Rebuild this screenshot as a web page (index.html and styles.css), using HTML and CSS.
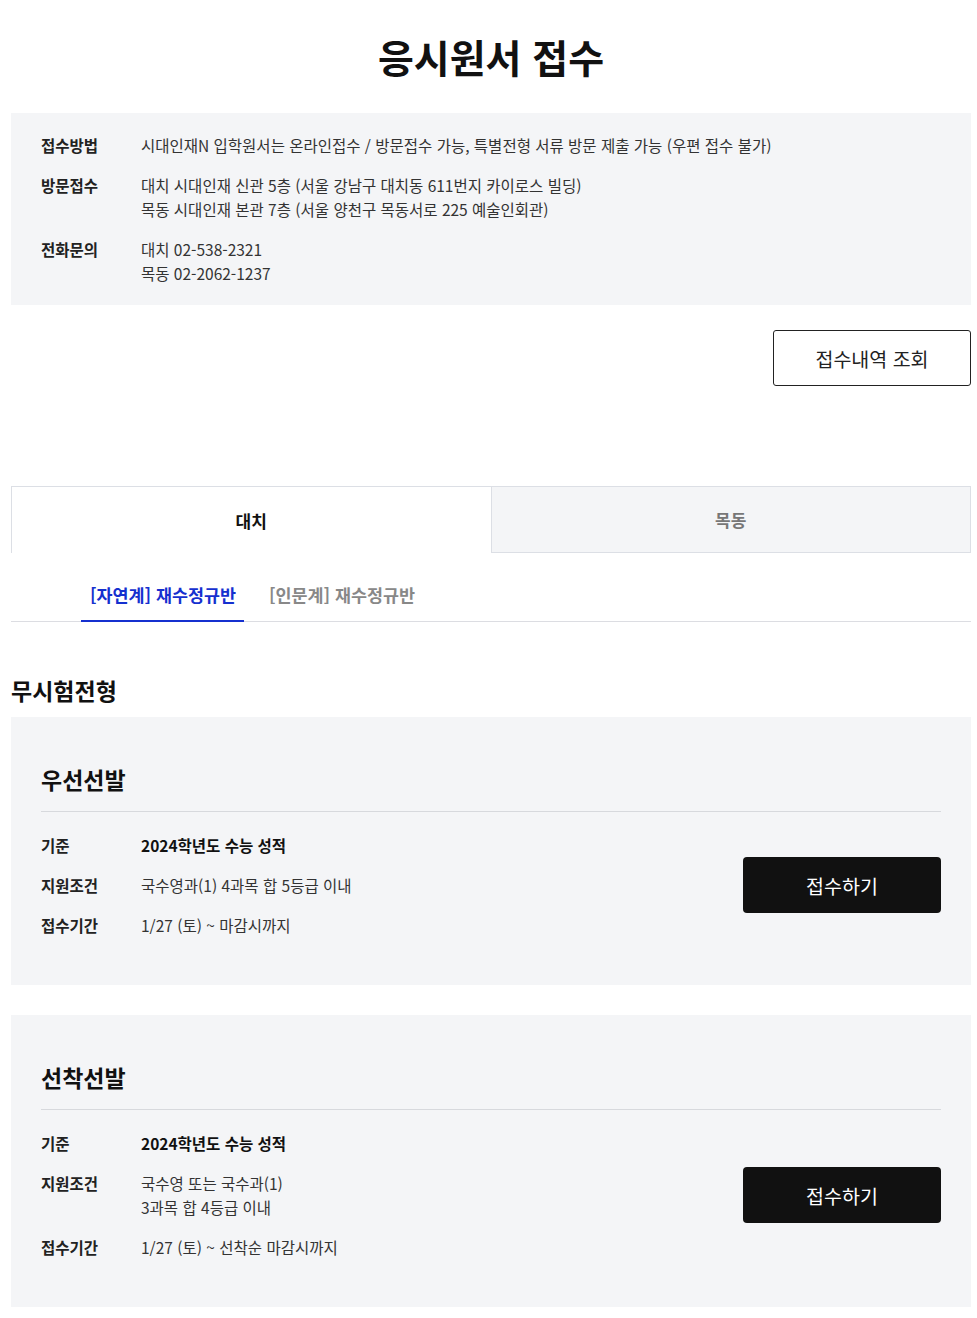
FILE: index.html
```html
<!DOCTYPE html>
<html lang="ko">
<head>
<meta charset="utf-8">
<title>응시원서 접수</title>
<link rel="stylesheet" href="styles.css">
</head>
<body>
<div class="page">
  <h1 class="page-title">응시원서 접수</h1>

  <section class="info-box">
    <dl class="info-list">
      <div class="info-row">
        <dt>접수방법</dt>
        <dd>시대인재N 입학원서는 온라인접수 / 방문접수 가능, 특별전형 서류 방문 제출 가능 (우편 접수 불가)</dd>
      </div>
      <div class="info-row">
        <dt>방문접수</dt>
        <dd>대치 시대인재 신관 5층 (서울 강남구 대치동 611번지 카이로스 빌딩)<br>목동 시대인재 본관 7층 (서울 양천구 목동서로 225 예술인회관)</dd>
      </div>
      <div class="info-row">
        <dt>전화문의</dt>
        <dd>대치 02-538-2321<br>목동 02-2062-1237</dd>
      </div>
    </dl>
  </section>

  <div class="history-wrap">
    <button class="btn-outline" type="button">접수내역 조회</button>
  </div>

  <nav class="campus-tabs">
    <a class="campus-tab active" href="#">대치</a>
    <a class="campus-tab" href="#">목동</a>
  </nav>

  <nav class="class-tabs">
    <a class="class-tab active" href="#">[자연계] 재수정규반</a>
    <a class="class-tab" href="#">[인문계] 재수정규반</a>
  </nav>

  <section class="section">
    <h2 class="section-title">무시험전형</h2>

    <article class="card">
      <h3 class="card-title">우선선발</h3>
      <div class="card-body">
        <dl class="card-list">
          <div class="card-row">
            <dt>기준</dt>
            <dd class="strong">2024학년도 수능 성적</dd>
          </div>
          <div class="card-row">
            <dt>지원조건</dt>
            <dd>국수영과(1) 4과목 합 5등급 이내</dd>
          </div>
          <div class="card-row">
            <dt>접수기간</dt>
            <dd>1/27 (토) ~ 마감시까지</dd>
          </div>
        </dl>
        <button class="btn-apply" type="button">접수하기</button>
      </div>
    </article>

    <article class="card">
      <h3 class="card-title">선착선발</h3>
      <div class="card-body">
        <dl class="card-list">
          <div class="card-row">
            <dt>기준</dt>
            <dd class="strong">2024학년도 수능 성적</dd>
          </div>
          <div class="card-row">
            <dt>지원조건</dt>
            <dd>국수영 또는 국수과(1)<br>3과목 합 4등급 이내</dd>
          </div>
          <div class="card-row">
            <dt>접수기간</dt>
            <dd>1/27 (토) ~ 선착순 마감시까지</dd>
          </div>
        </dl>
        <button class="btn-apply" type="button">접수하기</button>
      </div>
    </article>
  </section>
</div>
</body>
</html>
```

FILE: styles.css
```css
* { box-sizing: border-box; }

html, body {
  margin: 0;
  padding: 0;
  background: #fff;
}

body {
  font-family: "Noto Sans CJK KR", "Noto Sans", sans-serif;
  color: #222;
}

.page {
  width: 977px;
  padding: 32px 6px 40px 11px;
}

.page-title {
  margin: 0 0 33px;
  font-size: 39px;
  line-height: 48px;
  font-weight: 700;
  text-align: center;
  color: #111;
}

/* info box */
.info-box {
  background: #f4f5f7;
  padding: 20px 30px;
}

.info-list {
  margin: 0;
  display: flex;
  flex-direction: column;
  gap: 16px;
}

.info-row {
  display: flex;
  font-size: 15.5px;
  line-height: 24px;
}

.info-row dt {
  width: 100px;
  flex: none;
  font-weight: 700;
  color: #222;
}

.info-row dd {
  margin: 0;
  color: #333;
}

/* history button */
.history-wrap {
  display: flex;
  justify-content: flex-end;
  margin-top: 25px;
}

.btn-outline {
  width: 198px;
  height: 56px;
  border: 1px solid #222;
  border-radius: 3px;
  background: #fff;
  font-family: inherit;
  font-size: 19.5px;
  color: #222;
  padding: 0;
}

/* campus tabs */
.campus-tabs {
  display: flex;
  margin-top: 100px;
}

.campus-tab {
  flex: 1;
  height: 67px;
  display: flex;
  align-items: center;
  justify-content: center;
  font-size: 17px;
  font-weight: 700;
  text-decoration: none;
  border-top: 1px solid #dcdfe5;
}

.campus-tab.active {
  background: #fff;
  color: #111;
  border-left: 1px solid #dcdfe5;
}

.campus-tab:not(.active) {
  background: #f4f5f7;
  color: #777;
  border: 1px solid #dcdfe5;
}

/* class tabs */
.class-tabs {
  display: flex;
  gap: 16px;
  margin-top: 20px;
  padding-left: 70px;
  border-bottom: 1px solid #dcdde2;
}

.class-tab {
  padding: 10px 8px 13px 9px;
  font-size: 17.4px;
  line-height: 24px;
  font-weight: 700;
  color: #888;
  text-decoration: none;
  border-bottom: 2px solid transparent;
  margin-bottom: -1px;
}

.class-tab.active {
  color: #1530cf;
  border-bottom-color: #1530cf;
}

/* section */
.section {
  margin-top: 52px;
}

.section-title {
  margin: 0 0 11px;
  font-size: 23px;
  line-height: 32px;
  font-weight: 700;
  color: #111;
}

.card {
  background: #f4f5f7;
  padding: 46px 30px 48px;
}

.card + .card {
  margin-top: 30px;
}

.card-title {
  margin: 0;
  padding-bottom: 16px;
  border-bottom: 1px solid #d7d9dd;
  font-size: 23px;
  line-height: 32px;
  font-weight: 700;
  color: #111;
}

.card-body {
  display: flex;
  align-items: center;
  justify-content: space-between;
  margin-top: 21px;
}

.card-list {
  margin: 0;
  display: flex;
  flex-direction: column;
  gap: 16px;
}

.card-row {
  display: flex;
  font-size: 15.5px;
  line-height: 24px;
}

.card-row dt {
  width: 100px;
  flex: none;
  font-weight: 700;
  color: #222;
}

.card-row dd {
  margin: 0;
  color: #333;
}

.card-row dd.strong {
  font-weight: 700;
  color: #111;
}

.btn-apply {
  width: 198px;
  height: 56px;
  border: none;
  border-radius: 4px;
  background: #111;
  color: #fff;
  font-family: inherit;
  font-size: 19.5px;
  padding: 0;
}
```
